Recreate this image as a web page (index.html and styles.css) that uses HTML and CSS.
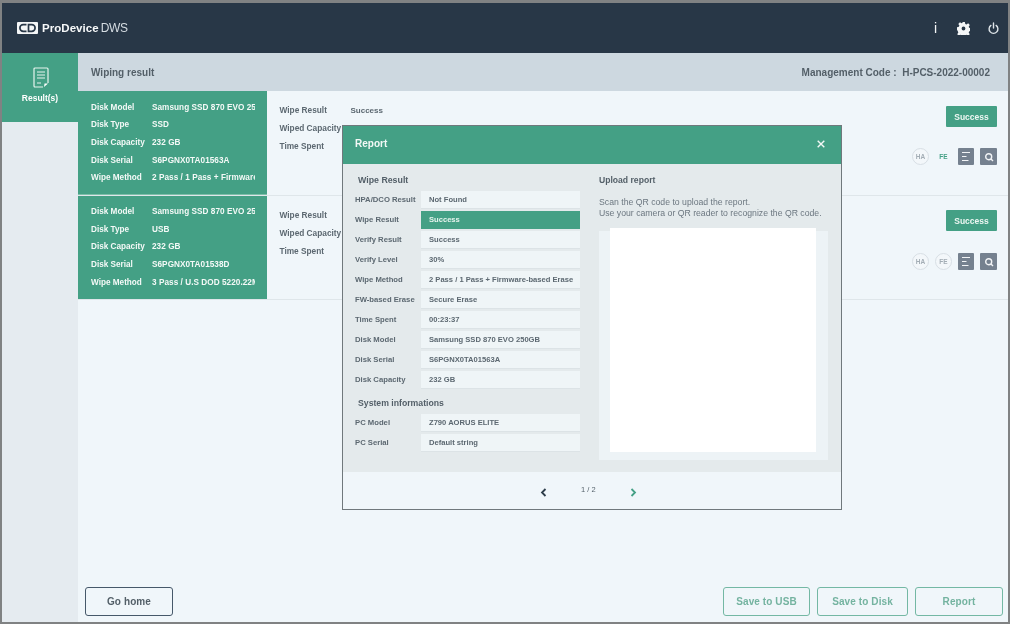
FILE: index.html
```html
<!DOCTYPE html>
<html lang="en">
<head>
<meta charset="utf-8">
<title>ProDevice DWS</title>
<link rel="stylesheet" href="styles.css">
</head>
<body>
<div class="frame">
  <header class="topbar">
    <div class="brand">
      <svg class="logo" width="21" height="12" viewBox="0 0 21 12"><rect width="21" height="12" rx="1" fill="#f4f6f7"/><path d="M9.500 2.700H6.200a3.300 3.300 0 0 0 0 6.600h3.300" fill="none" stroke="#283747" stroke-width="1.700"/><path d="M11.500 2.700h3.300a3.300 3.300 0 0 1 0 6.600h-3.300z" fill="none" stroke="#283747" stroke-width="1.700"/></svg>
      <span class="brand-name">ProDevice</span><span class="brand-sub">DWS</span>
    </div>
    <div class="top-icons">
      <span class="info">i</span>
      <svg width="13" height="13" viewBox="0 0 24 24"><path fill="#f4f6f7" fill-rule="evenodd" d="M9.500 0h5l.8 3.600 2.200.9 3.100-2 3 3-2 3.100.9 2.200 3.500.7v5l-3.500.7-.9 2.200 2 3.100-3 3-3.100-2-2.200.9-.8 3.600h-5l-.8-3.600-2.200-.9-3.100 2-3-3 2-3.100-.9-2.200L0 14.500v-5l3.500-.7.900-2.200-2-3.100 3-3 3.100 2 2.200-.9zM12 8.500a3.500 3.500 0 1 0 0 7 3.500 3.500 0 0 0 0-7z"/></svg>
      <svg width="11" height="13" viewBox="0 0 11 13"><path d="M2.900 3.400a4.400 4.400 0 1 0 5.200 0" fill="none" stroke="#dfe5e9" stroke-width="1.400" stroke-linecap="round"/><path d="M5.500 1v5" stroke="#dfe5e9" stroke-width="1.400" stroke-linecap="round"/></svg>
    </div>
  </header>
  <div class="main">
    <nav class="sidebar">
      <div class="nav-item">
        <svg class="nav-icon" width="16" height="21" viewBox="0 0 16 21"><path d="M10 20H2a1 1 0 0 1-1-1V2a1 1 0 0 1 1-1h12a1 1 0 0 1 1 1v14" fill="none" stroke="#e6f3ee" stroke-width="1.200"/><path d="M4 5h8M4 8h8M4 11h8M4 16h4" stroke="#e6f3ee" stroke-width="1"/><path d="M11 20l4-3.500h-3.500z" fill="#fff"/></svg>
        <span>Result(s)</span>
      </div>
    </nav>
    <section class="content">
      <div class="titlebar">
        <span>Wiping result</span>
        <span class="code">Management Code :&nbsp; H-PCS-2022-00002</span>
      </div>
      <article class="row">
        <dl class="disk">
          <div class="kv"><dt>Disk Model</dt><dd>Samsung SSD 870 EVO 250GB</dd></div>
          <div class="kv"><dt>Disk Type</dt><dd>SSD</dd></div>
          <div class="kv"><dt>Disk Capacity</dt><dd>232 GB</dd></div>
          <div class="kv"><dt>Disk Serial</dt><dd>S6PGNX0TA01563A</dd></div>
          <div class="kv"><dt>Wipe Method</dt><dd>2 Pass / 1 Pass + Firmware-based Erase</dd></div>
        </dl>
        <dl class="summary">
          <div class="skv"><dt>Wipe Result</dt><dd>Success</dd></div>
          <div class="skv"><dt>Wiped Capacity</dt><dd>232 GB</dd></div>
          <div class="skv"><dt>Time Spent</dt><dd>00:23:37</dd></div>
        </dl>
        <div class="actions">
          <span class="badge">Success</span>
          <div class="tools">
            <span class="chip">HA</span>
            <span class="chip chip-on">FE</span>
            <span class="tool"><svg width="10" height="11" viewBox="0 0 10 11"><path d="M1 1.500h8M1 5.500h4.500M1 9.500h6.500" stroke="#f2f4f6" stroke-width="1.200"/></svg></span>
            <span class="tool"><svg width="10" height="10" viewBox="0 0 10 10"><circle cx="4.700" cy="4.700" r="3" fill="none" stroke="#f2f4f6" stroke-width="1.400"/><path d="M7 7l2 2" stroke="#f2f4f6" stroke-width="1.400"/></svg></span>
          </div>
        </div>
      </article>
      <article class="row">
        <dl class="disk">
          <div class="kv"><dt>Disk Model</dt><dd>Samsung SSD 870 EVO 250GB</dd></div>
          <div class="kv"><dt>Disk Type</dt><dd>USB</dd></div>
          <div class="kv"><dt>Disk Capacity</dt><dd>232 GB</dd></div>
          <div class="kv"><dt>Disk Serial</dt><dd>S6PGNX0TA01538D</dd></div>
          <div class="kv"><dt>Wipe Method</dt><dd>3 Pass / U.S DOD 5220.22M</dd></div>
        </dl>
        <dl class="summary">
          <div class="skv"><dt>Wipe Result</dt><dd>Success</dd></div>
          <div class="skv"><dt>Wiped Capacity</dt><dd>232 GB</dd></div>
          <div class="skv"><dt>Time Spent</dt><dd>00:23:37</dd></div>
        </dl>
        <div class="actions">
          <span class="badge">Success</span>
          <div class="tools">
            <span class="chip">HA</span>
            <span class="chip">FE</span>
            <span class="tool"><svg width="10" height="11" viewBox="0 0 10 11"><path d="M1 1.500h8M1 5.500h4.500M1 9.500h6.500" stroke="#f2f4f6" stroke-width="1.200"/></svg></span>
            <span class="tool"><svg width="10" height="10" viewBox="0 0 10 10"><circle cx="4.700" cy="4.700" r="3" fill="none" stroke="#f2f4f6" stroke-width="1.400"/><path d="M7 7l2 2" stroke="#f2f4f6" stroke-width="1.400"/></svg></span>
          </div>
        </div>
      </article>
      <footer class="bottom">
        <button class="btn btn-dark">Go home</button>
        <div class="btn-group">
          <button class="btn btn-green btn-usb">Save to USB</button>
          <button class="btn btn-green btn-disk">Save to Disk</button>
          <button class="btn btn-green">Report</button>
        </div>
      </footer>
    </section>
  </div>

  <div class="modal">
    <div class="modal-head">
      <span>Report</span>
      <svg width="8" height="8" viewBox="0 0 8 8"><path d="M.7.700l6.600 6.600M7.300.700L.7 7.300" stroke="#f4f8f6" stroke-width="1.400"/></svg>
    </div>
    <div class="modal-body">
      <div class="col-left">
        <h3 class="sub">Wipe Result</h3>
        <div class="field"><label>HPA/DCO Result</label><span>Not Found</span></div>
        <div class="field field-ok"><label>Wipe Result</label><span>Success</span></div>
        <div class="field"><label>Verify Result</label><span>Success</span></div>
        <div class="field"><label>Verify Level</label><span>30%</span></div>
        <div class="field"><label>Wipe Method</label><span>2 Pass / 1 Pass + Firmware-based Erase</span></div>
        <div class="field"><label>FW-based Erase</label><span>Secure Erase</span></div>
        <div class="field"><label>Time Spent</label><span>00:23:37</span></div>
        <div class="field"><label>Disk Model</label><span>Samsung SSD 870 EVO 250GB</span></div>
        <div class="field"><label>Disk Serial</label><span>S6PGNX0TA01563A</span></div>
        <div class="field"><label>Disk Capacity</label><span>232 GB</span></div>
        <h3 class="sub sub-sys">System informations</h3>
        <div class="field"><label>PC Model</label><span>Z790 AORUS ELITE</span></div>
        <div class="field"><label>PC Serial</label><span>Default string</span></div>
      </div>
      <div class="col-right">
        <h3 class="upload-title">Upload report</h3>
        <p class="upload-text">Scan the QR code to upload the report.<br>Use your camera or QR reader to recognize the QR code.</p>
        <div class="qr-wrap"><div class="qr"></div></div>
      </div>
    </div>
    <div class="modal-foot">
      <svg width="7" height="9" viewBox="0 0 7 9"><path d="M5.500 1L2 4.500 5.500 8" fill="none" stroke="#2e3d4a" stroke-width="1.800"/></svg>
      <span class="pager">1 / 2</span>
      <svg width="7" height="9" viewBox="0 0 7 9"><path d="M1.500 1L5 4.500 1.500 8" fill="none" stroke="#44a085" stroke-width="1.800"/></svg>
    </div>
  </div>
</div>
</body>
</html>
```

FILE: styles.css
```css
* { box-sizing: border-box; }
html, body { margin: 0; height: 100%; }
body {
  width: 1010px;
  height: 624px;
  overflow: hidden;
  background: #808283;
  font-family: "Liberation Sans", Arial, sans-serif;
  font-weight: 700;
  color: #5c6871;
}
.frame {
  position: relative;
  width: 1006px;
  height: 619px;
  margin: 3px 2px 2px;
  display: flex;
  flex-direction: column;
  overflow: hidden;
  background: #f0f6fa;
  filter: blur(0.45px);
}
.topbar {
  height: 50px;
  flex: none;
  background: #283747;
  display: flex;
  align-items: center;
  justify-content: space-between;
  padding: 0 9px 0 15px;
}
.brand { display: flex; align-items: center; color: #f6f8f9; }
.logo { margin-right: 4px; }
.brand-name { font-size: 11.500px; letter-spacing: 0.05px; }
.brand-sub { font-size: 12px; font-weight: 400; margin-left: 2px; color: #d5dce2; letter-spacing: -0.4px; }
.top-icons { display: flex; align-items: center; gap: 18px; }
.info { color: #f4f6f7; font-size: 14px; font-weight: 400; margin-right: 2px; }
.main { flex: 1; display: flex; min-height: 0; }
.sidebar { width: 76px; flex: none; background: #e5ebf0; }
.nav-item {
  height: 69px;
  background: #44a085;
  color: #fff;
  display: flex;
  flex-direction: column;
  align-items: center;
  padding-top: 15px;
  gap: 5px;
  font-size: 8.500px;
}
.nav-icon { margin-left: 2px; margin-top: -1px; }
.content { flex: 1; display: flex; flex-direction: column; min-width: 0; }
.titlebar {
  height: 38px;
  flex: none;
  background: #cdd8e0;
  display: flex;
  align-items: center;
  justify-content: space-between;
  padding: 0 18px 0 13px;
  font-size: 10px;
  color: #535f68;
}
.code { font-size: 10px; }
.row {
  height: 105px;
  flex: none;
  display: flex;
  border-bottom: 1px solid #dfe6ea;
}
.row + .row { height: 104px; }
.disk {
  width: 189px;
  flex: none;
  margin: 0;
  background: #44a085;
  color: #f4f9f7;
  padding: 7.500px 12px 0 13px;
  font-size: 8.200px;
  border-bottom: 1px solid #7dbfa9;
}
.row + .row .disk { border-bottom: 0; padding-top: 7px; }
.kv { display: flex; height: 17.600px; align-items: center; }
.kv dt { width: 61px; flex: none; white-space: nowrap; }
.kv dd { margin: 0; white-space: nowrap; overflow: hidden; letter-spacing: 0.05px; }
.summary { margin: 0; padding: 10px 0 0 12.500px; width: 200px; flex: none; font-size: 8.300px; }
.skv { display: flex; height: 18.200px; align-items: center; }
.skv dt { width: 71px; flex: none; white-space: nowrap; }
.skv dd { margin: 0; font-size: 8px; }
.actions {
  flex: 1;
  display: flex;
  flex-direction: column;
  align-items: flex-end;
  padding: 15px 11px 0 0;
}
.row + .row .actions { padding-top: 14px; }
.row + .row .tools { margin-top: 22px; }
.badge {
  width: 51px;
  height: 21px;
  background: #44a085;
  color: #eef7f3;
  border-radius: 1px;
  font-size: 8.500px;
  display: flex;
  align-items: center;
  justify-content: center;
}
.tools { display: flex; align-items: center; margin-top: 21px; gap: 6px; }
.chip {
  width: 17px;
  height: 17px;
  border-radius: 50%;
  border: 1px solid #d8dfe5;
  color: #a3adb5;
  background: #f3f7fa;
  font-size: 6.500px;
  font-weight: 700;
  display: flex;
  align-items: center;
  justify-content: center;
}
.chip-on { border-color: transparent; background: none; color: #44a085; font-weight: 700; }
.tool {
  width: 17px;
  height: 17px;
  background: #75818f;
  border-radius: 1px;
  display: flex;
  align-items: center;
  justify-content: center;
}
.tool:nth-child(3) { width: 16px; }
.bottom {
  margin-top: auto;
  display: flex;
  justify-content: space-between;
  padding: 0 5px 6px 7px;
}
.btn-group { display: flex; gap: 7px; }
.btn {
  height: 29px;
  width: 88px;
  background: transparent;
  border-radius: 3px;
  font: 700 10px "Liberation Sans", Arial, sans-serif;
  letter-spacing: 0.1px;
}
.btn-dark { border: 1.500px solid #46586a; color: #535f68; }
.btn-green { border: 1.500px solid #74b8a4; color: #74b3a0; }
.btn-usb { width: 87px; }
.btn-disk { width: 91px; }
.modal {
  position: absolute;
  left: 340px;
  top: 122px;
  width: 500px;
  height: 385px;
  background: #f0f6fa;
  border: 1px solid #70787c;
  display: flex;
  flex-direction: column;
}
.modal-head {
  height: 38px;
  flex: none;
  background: #44a085;
  color: #f2f8f5;
  font-size: 10px;
  display: flex;
  align-items: center;
  justify-content: space-between;
  padding: 0 16px 3px 12px;
}
.modal-body {
  height: 308px;
  flex: none;
  background: #e4eaec;
  display: flex;
  padding: 0 13px 0 12px;
}
.col-left { width: 226px; flex: none; }
.sub {
  margin: 0;
  height: 27px;
  padding: 7px 0 0 3px;
  font-size: 8.800px;
  line-height: 18px;
  color: #535f68;
}
.sub-sys { height: 23px; padding-top: 3px; font-size: 8.700px; }
.field { display: flex; height: 20px; align-items: flex-start; font-size: 7.700px; }
.field label { width: 66px; flex: none; line-height: 18px; white-space: nowrap; }
.field span {
  width: 159px;
  height: 18px;
  line-height: 17px;
  background: #eff5f7;
  border-bottom: 1px solid #dce3e6;
  padding-left: 8px;
  white-space: nowrap;
  font-size: 7.600px;
}
.field-ok span { background: #44a085; color: #e8f4ef; border-bottom: 0; }
.col-right { margin-left: 18px; width: 229px; flex: none; display: flex; flex-direction: column; }
.upload-title { margin: 0; padding-top: 10px; font-size: 8.600px; line-height: 12px; color: #535f68; }
.upload-text { margin: 0; padding-top: 11px; font-size: 8.700px; line-height: 10.500px; font-weight: 400; color: #6c7780; white-space: nowrap; }
.qr-wrap {
  margin-top: 13px;
  height: 229px;
  background: #edf3f6;
  padding: 0 12px 0 11px;
}
.qr { height: 224px; margin-top: -3px; background: #fff; }
.modal-foot {
  flex: 1;
  display: flex;
  align-items: center;
  padding-left: 197px;
  padding-top: 4px;
}
.pager { font-size: 7.500px; font-weight: 400; color: #56636c; margin: -6px 34px 0 34px; }
```
